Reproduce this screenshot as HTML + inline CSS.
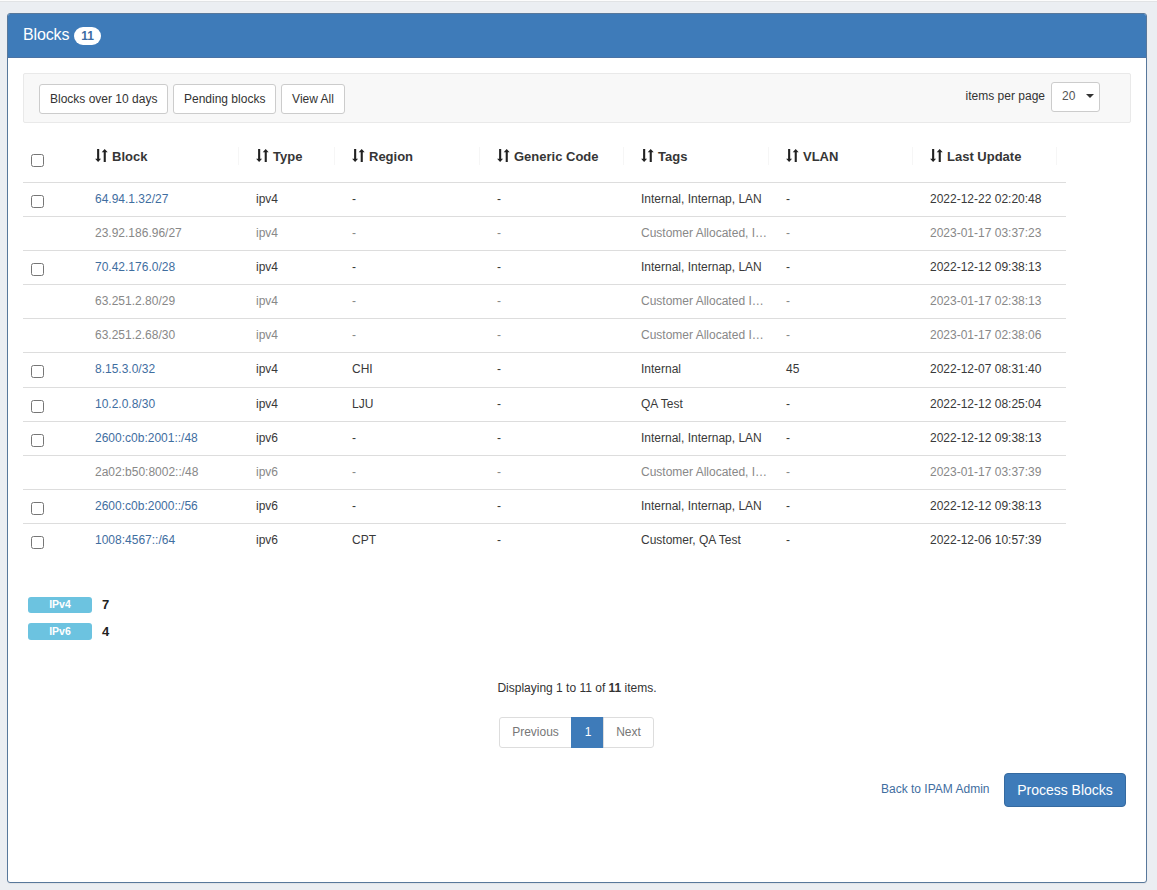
<!DOCTYPE html>
<html lang="en">
<head>
<meta charset="utf-8">
<title>Blocks</title>
<style>
*{box-sizing:border-box}
html,body{margin:0;padding:0}
body{width:1157px;height:890px;overflow:hidden;background:#ebeef2;font-family:"Liberation Sans",sans-serif;font-size:12px;line-height:1.42857;color:#333;position:relative}
.topline{position:absolute;left:0;top:0;width:1157px;height:2px;background:#fcfcfc;border-bottom:1px solid #e1e3e5}
.panel{position:absolute;left:7px;top:13px;width:1140px;height:870px;background:#fff;border:1px solid #58789b;border-radius:3px;box-shadow:0 1px 1px rgba(0,0,0,.05)}
.heading{height:44px;border-bottom:1px solid #4a73a5;background:#3e7bb9;color:#fff;font-size:16px;padding:9px 15px 11px;line-height:24px;border-radius:2px 2px 0 0;white-space:nowrap}
.badge{display:inline-block;min-width:10px;padding:3px 7.5px;font-size:12px;font-weight:bold;line-height:1;color:#3d6ca3;background:#fff;border-radius:10px;vertical-align:middle;position:relative;top:0px;margin-left:0px}
.well{position:absolute;left:15px;top:59px;width:1108px;height:50px;background:#f8f8f8;border:1px solid #e9e9e9;border-radius:2px}
.btn{position:absolute;top:10px;height:30px;border:1px solid #ccc;border-radius:3px;background:#fff;color:#333;font-size:12px;line-height:18px;padding:5px 10px;text-align:center;white-space:nowrap}
.ipp{position:absolute;right:85px;top:13px;font-size:12px;line-height:18px;color:#333}
.sel{position:absolute;left:1027px;top:8px;width:49px;height:30px;border:1px solid #ccc;border-radius:3px;background:#fff;color:#555;font-size:12px;line-height:26px;padding-left:10px}
.sel:after{content:"";position:absolute;right:5px;top:10.5px;border-left:4px solid transparent;border-right:4px solid transparent;border-top:4px solid #333}
table{position:absolute;left:15px;top:118px;width:1043px;border-collapse:collapse;table-layout:fixed}
th{height:50px;padding-top:2px !important;text-align:left;font-size:13px;font-weight:bold;color:#363636;padding:0 8px;border-bottom:1px solid #ddd;position:relative;white-space:nowrap;vertical-align:middle}
th .sep{position:absolute;right:9px;top:15px;width:1px;height:18px;background:#f6f6f6}
td{height:34px;padding:8.93px 8px 0;border-top:1px solid #ddd;white-space:nowrap;overflow:hidden;text-overflow:ellipsis;vertical-align:top;color:#393939}
th .cb{top:2px}
tr.first td{border-top:0}
tr.tall td{height:35px}
tr.dis td{color:#888}
a{color:#3f6e9f;text-decoration:none}
.cb{display:inline-block;width:13px;height:13px;border:1px solid #767676;border-radius:2.5px;background:#fff;vertical-align:middle;position:relative;top:1px}
svg.sort{width:13px;height:13px;vertical-align:-1px;margin-right:4px}
.label{position:absolute;left:20px;width:64px;height:15px;background:#6cc3e0;border-radius:3px;color:#fff;font-weight:bold;font-size:10.5px;line-height:15px;text-align:center}
.cnt{position:absolute;left:94px;font-weight:bold;font-size:13px;line-height:16px;color:#222}
.disp{position:absolute;left:0;width:1138px;top:665px;text-align:center;font-size:12px;line-height:18px}
.pag{position:absolute;top:703px;height:31px;border:1px solid #ddd;background:#fff;color:#777;font-size:12px;line-height:18px;padding:5px 10px;text-align:center}
.back{position:absolute;left:873px;top:766px;font-size:12px;line-height:18px}
.proc{position:absolute;left:996px;top:759px;width:122px;height:34px;background:#3e7bb9;border:1px solid #356aa0;border-radius:4px;color:#fff;font-size:14px;line-height:20px;padding:6px 0;text-align:center}
</style>
</head>
<body>
<div class="topline"></div>
<div class="panel">
  <div class="heading"><span style="letter-spacing:-0.15px">Blocks</span> <span class="badge">11</span></div>
  <div class="well">
    <div class="btn" style="left:15px;width:129px">Blocks over 10 days</div>
    <div class="btn" style="left:149px;width:103px">Pending blocks</div>
    <div class="btn" style="left:257px;width:64px">View All</div>
    <div class="ipp">items per page</div>
    <div class="sel">20</div>
  </div>
  <table>
    <colgroup><col style="width:64px"><col style="width:161px"><col style="width:96px"><col style="width:145px"><col style="width:144px"><col style="width:145px"><col style="width:144px"><col style="width:144px"></colgroup>
    <thead>
      <tr>
        <th><span class="cb"></span></th>
        <th><svg class="sort" viewBox="0 0 13 13"><path d="M2.1 0h2.1v9.8h1.9L3.1 13 0.1 9.8h2z M8.7 13h2.1V3.2h1.9L9.7 0 6.7 3.2h2z" fill="#222"/></svg>Block<span class="sep"></span></th>
        <th><svg class="sort" viewBox="0 0 13 13"><path d="M2.1 0h2.1v9.8h1.9L3.1 13 0.1 9.8h2z M8.7 13h2.1V3.2h1.9L9.7 0 6.7 3.2h2z" fill="#222"/></svg>Type<span class="sep"></span></th>
        <th><svg class="sort" viewBox="0 0 13 13"><path d="M2.1 0h2.1v9.8h1.9L3.1 13 0.1 9.8h2z M8.7 13h2.1V3.2h1.9L9.7 0 6.7 3.2h2z" fill="#222"/></svg>Region<span class="sep"></span></th>
        <th><svg class="sort" viewBox="0 0 13 13"><path d="M2.1 0h2.1v9.8h1.9L3.1 13 0.1 9.8h2z M8.7 13h2.1V3.2h1.9L9.7 0 6.7 3.2h2z" fill="#222"/></svg>Generic Code<span class="sep"></span></th>
        <th><svg class="sort" viewBox="0 0 13 13"><path d="M2.1 0h2.1v9.8h1.9L3.1 13 0.1 9.8h2z M8.7 13h2.1V3.2h1.9L9.7 0 6.7 3.2h2z" fill="#222"/></svg>Tags<span class="sep"></span></th>
        <th><svg class="sort" viewBox="0 0 13 13"><path d="M2.1 0h2.1v9.8h1.9L3.1 13 0.1 9.8h2z M8.7 13h2.1V3.2h1.9L9.7 0 6.7 3.2h2z" fill="#222"/></svg>VLAN<span class="sep"></span></th>
        <th><svg class="sort" viewBox="0 0 13 13"><path d="M2.1 0h2.1v9.8h1.9L3.1 13 0.1 9.8h2z M8.7 13h2.1V3.2h1.9L9.7 0 6.7 3.2h2z" fill="#222"/></svg>Last Update<span class="sep"></span></th>
      </tr>
    </thead>
    <tbody>
      <tr class="first"><td><span class="cb"></span></td><td><a>64.94.1.32/27</a></td><td>ipv4</td><td>-</td><td>-</td><td>Internal, Internap, LAN</td><td>-</td><td>2022-12-22 02:20:48</td></tr>
      <tr class="dis"><td></td><td>23.92.186.96/27</td><td>ipv4</td><td>-</td><td>-</td><td>Customer Allocated, Internap</td><td>-</td><td>2023-01-17 03:37:23</td></tr>
      <tr><td><span class="cb"></span></td><td><a>70.42.176.0/28</a></td><td>ipv4</td><td>-</td><td>-</td><td>Internal, Internap, LAN</td><td>-</td><td>2022-12-12 09:38:13</td></tr>
      <tr class="dis"><td></td><td>63.251.2.80/29</td><td>ipv4</td><td>-</td><td>-</td><td>Customer Allocated Internap</td><td>-</td><td>2023-01-17 02:38:13</td></tr>
      <tr class="dis"><td></td><td>63.251.2.68/30</td><td>ipv4</td><td>-</td><td>-</td><td>Customer Allocated Internap</td><td>-</td><td>2023-01-17 02:38:06</td></tr>
      <tr class="tall"><td><span class="cb"></span></td><td><a>8.15.3.0/32</a></td><td>ipv4</td><td>CHI</td><td>-</td><td>Internal</td><td>45</td><td>2022-12-07 08:31:40</td></tr>
      <tr><td><span class="cb"></span></td><td><a>10.2.0.8/30</a></td><td>ipv4</td><td>LJU</td><td>-</td><td>QA Test</td><td>-</td><td>2022-12-12 08:25:04</td></tr>
      <tr><td><span class="cb"></span></td><td><a>2600:c0b:2001::/48</a></td><td>ipv6</td><td>-</td><td>-</td><td>Internal, Internap, LAN</td><td>-</td><td>2022-12-12 09:38:13</td></tr>
      <tr class="dis"><td></td><td>2a02:b50:8002::/48</td><td>ipv6</td><td>-</td><td>-</td><td>Customer Allocated, Internap</td><td>-</td><td>2023-01-17 03:37:39</td></tr>
      <tr><td><span class="cb"></span></td><td><a>2600:c0b:2000::/56</a></td><td>ipv6</td><td>-</td><td>-</td><td>Internal, Internap, LAN</td><td>-</td><td>2022-12-12 09:38:13</td></tr>
      <tr><td><span class="cb"></span></td><td><a>1008:4567::/64</a></td><td>ipv6</td><td>CPT</td><td>-</td><td>Customer, QA Test</td><td>-</td><td>2022-12-06 10:57:39</td></tr>
    </tbody>
  </table>
  <div class="label" style="top:583px;height:16px">IPv4</div><div class="cnt" style="top:583px">7</div>
  <div class="label" style="top:609px;height:17px;padding-top:1px">IPv6</div><div class="cnt" style="top:610px">4</div>
  <div class="disp">Displaying 1 to 11 of <b>11</b> items.</div>
  <div class="pag" style="left:491px;width:73px;border-radius:3px 0 0 3px">Previous</div>
  <div class="pag" style="left:563px;width:34px;background:#3e7bb9;border-color:#3e7bb9;color:#fff">1</div>
  <div class="pag" style="left:595px;width:51px;border-radius:0 3px 3px 0">Next</div>
  <a class="back">Back to IPAM Admin</a>
  <div class="proc">Process Blocks</div>
</div>
</body>
</html>
